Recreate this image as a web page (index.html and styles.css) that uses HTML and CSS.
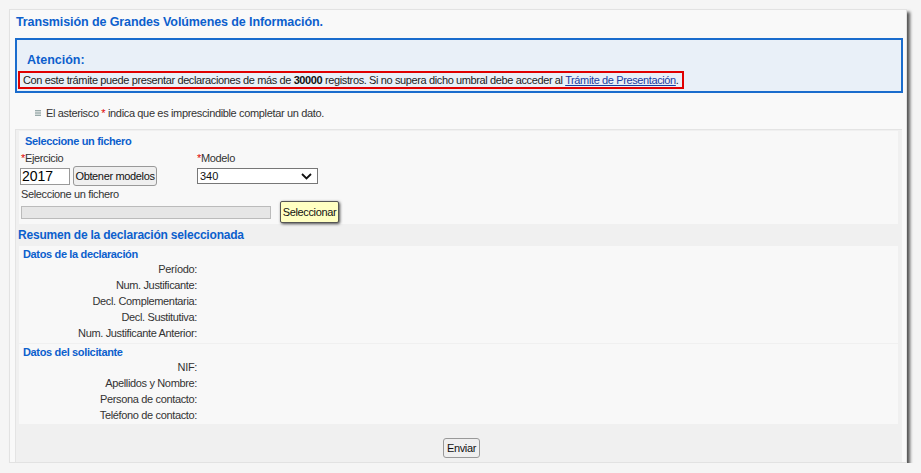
FILE: index.html
```html
<!doctype html>
<html>
<head>
<meta charset="utf-8">
<title>Transmisión de Grandes Volúmenes de Información</title>
<link rel="stylesheet" href="styles.css">
</head>
<body>
<div class="panel">
	<div class="titulo">Transmisión de Grandes Volúmenes de Información.</div>
	<div class="atencion">
		<div class="atencion_tit">Atención:</div>
		<div class="aviso">Con este trámite puede presentar declaraciones de más de <b>30000</b> registros. Si no supera dicho umbral debe acceder al <a href="#">Trámite de Presentación</a>.</div>
	</div>
	<div class="nota">
		<svg class="vineta" width="6" height="6" viewBox="0 0 6 6"><rect x="0" y="0" width="6" height="1.4" fill="#9aa"/><rect x="0" y="2.3" width="6" height="1.4" fill="#9aa"/><rect x="0" y="4.6" width="6" height="1.4" fill="#9aa"/></svg>
		<span>El asterisco <span class="ast">*</span> indica que es imprescindible completar un dato.</span>
	</div>
	<div class="formulario">
		<div class="caja fichero">
			<div class="subtit">Seleccione un fichero</div>
			<div class="fila_campos">
				<div class="col_ejercicio">
					<div class="etiqueta"><span class="ast">*</span>Ejercicio</div>
					<div class="controles">
						<input class="ejercicio" type="text" value="2017">
						<button class="boton">Obtener modelos</button>
					</div>
				</div>
				<div class="col_modelo">
					<div class="etiqueta"><span class="ast">*</span>Modelo</div>
					<div class="controles">
						<div class="combo">
							<select><option>340</option></select>
							<svg class="flecha" width="11" height="7" viewBox="0 0 11 7"><polyline points="1,1 5.5,5.5 10,1" fill="none" stroke="#111" stroke-width="1.8"/></svg>
						</div>
					</div>
				</div>
			</div>
			<div class="etiqueta sel_lbl">Seleccione un fichero</div>
			<div class="fila_fichero">
				<div class="ruta"></div>
				<button class="seleccionar">Seleccionar</button>
			</div>
		</div>
		<div class="banda">Resumen de la declaración seleccionada</div>
		<div class="caja datos">
			<div class="subtit">Datos de la declaración</div>
			<div class="fila"><span class="lbl">Período:</span></div>
			<div class="fila"><span class="lbl">Num. Justificante:</span></div>
			<div class="fila"><span class="lbl">Decl. Complementaria:</span></div>
			<div class="fila"><span class="lbl">Decl. Sustitutiva:</span></div>
			<div class="fila"><span class="lbl">Num. Justificante Anterior:</span></div>
		</div>
		<div class="caja datos solicitante">
			<div class="subtit">Datos del solicitante</div>
			<div class="fila"><span class="lbl">NIF:</span></div>
			<div class="fila"><span class="lbl">Apellidos y Nombre:</span></div>
			<div class="fila"><span class="lbl">Persona de contacto:</span></div>
			<div class="fila"><span class="lbl">Teléfono de contacto:</span></div>
		</div>
		<div class="pie">
			<button class="boton enviar">Enviar</button>
		</div>
	</div>
</div>
</body>
</html>
```
FILE: styles.css
```css
*{
	margin:0;
	padding:0;
	box-sizing:border-box;
}
body{
	background:#f5f5f5;
	font-family:"Liberation Sans", Arial, sans-serif;
	font-size:11px;
	letter-spacing:-0.35px;
	color:#333;
}
.panel{
	margin:9px 0 0 9px;
	width:898px;
	height:454px;
	background:#f9f9f9;
	border:1px solid #e2e2e2;
	box-shadow:3px 3px 3px rgba(0,0,0,0.65);
	padding:0 4px 0 5px;
}
.titulo{
	padding:2px 0 0 1px;
	height:28px;
	line-height:20px;
	font-size:12.5px;
	letter-spacing:-0.1px;
	font-weight:bold;
	color:#0c5fcd;
}
.atencion{
	height:55px;
	border:2px solid #1a6ccd;
	background:#e9f0f8;
	padding:12px 0 0 1px;
	margin-right:-1px;
}
.atencion_tit{
	padding-left:9px;
	line-height:16px;
	font-size:12.5px;
	letter-spacing:0;
	font-weight:bold;
	color:#0c5fcd;
}
.aviso{
	display:inline-block;
	margin-top:3px;
	border:2px solid #e00000;
	padding:0 3px;
	line-height:14px;
	letter-spacing:-0.38px;
	color:#222;
}
.aviso b{
	color:#111;
}
.aviso a{
	color:#1a3c9e;
}
.nota{
	margin-top:12px;
	padding-left:20px;
	line-height:16px;
	display:flex;
	align-items:center;
	gap:5px;
}
.vineta{
	flex:none;
}
.ast{
	color:#e00000;
}
.formulario{
	margin-top:8px;
	height:333px;
	background:#f0f0f0;
	border-top:1px solid #e4e4e4;
	border-left:1px solid #e4e4e4;
	padding:1px 4px 0 3px;
	display:flex;
	flex-direction:column;
}
.caja{
	background:#f8f8f8;
}
.fichero{
	height:93px;
	padding:3px 0 0 2px;
}
.subtit{
	padding-left:4px;
	line-height:14px;
	font-weight:bold;
	color:#0c5fcd;
}
.etiqueta{
	line-height:14px;
}
.sel_lbl{
	margin-top:1px;
}
.fila_campos{
	display:flex;
	margin-top:3px;
}
.col_ejercicio{
	width:176px;
}
.controles{
	display:flex;
	align-items:center;
	height:20px;
	margin-top:1px;
}
.ejercicio{
	width:50px;
	height:17px;
	border:1px solid #999;
	background:#fff;
	font-family:"Liberation Sans", Arial, sans-serif;
	font-size:14px;
	letter-spacing:0;
	padding-left:1px;
	color:#000;
	margin-left:-1px;
}
.boton{
	font-family:"Liberation Sans", Arial, sans-serif;
	font-size:11px;
	letter-spacing:-0.35px;
	color:#111;
	background:#efefef;
	border:1px solid #999;
	border-radius:3px;
	height:20px;
	padding:0;
	white-space:nowrap;
}
.col_ejercicio .boton{
	margin-left:3px;
	width:84px;
}
.combo{
	position:relative;
	width:121px;
	height:16px;
}
.combo select{
	appearance:none;
	-webkit-appearance:none;
	width:100%;
	height:100%;
	border:1px solid #777;
	background:#fff;
	font-family:"Liberation Sans", Arial, sans-serif;
	font-size:11px;
	color:#111;
	padding-left:2px;
}
.flecha{
	position:absolute;
	right:6px;
	top:5px;
}
.fila_fichero{
	display:flex;
	align-items:center;
	height:22px;
}
.ruta{
	width:250px;
	height:13px;
	background:#e6e6e6;
	border:1px solid #bbb;
}
.seleccionar{
	margin-left:9px;
	width:59px;
	height:22px;
	font-family:"Liberation Sans", Arial, sans-serif;
	font-size:11px;
	letter-spacing:-0.35px;
	white-space:nowrap;
	color:#111;
	background:#ffffc2;
	border:1px solid #555;
	border-radius:2px;
	box-shadow:1px 1px 3px rgba(0,0,0,0.7);
}
.banda{
	height:22px;
	line-height:22px;
	margin-left:-1px;
	font-size:12px;
	letter-spacing:-0.2px;
	font-weight:bold;
	color:#0c5fcd;
}
.datos{
	padding-top:1px;
	height:97px;
}
.solicitante{
	margin-top:1px;
	height:80px;
}
.fila{
	display:flex;
	height:16px;
	align-items:center;
}
.lbl{
	width:178px;
	text-align:right;
}
.pie{
	padding:14px 0 0 6px;
	text-align:center;
}
.enviar{
	width:37px;
}
```
